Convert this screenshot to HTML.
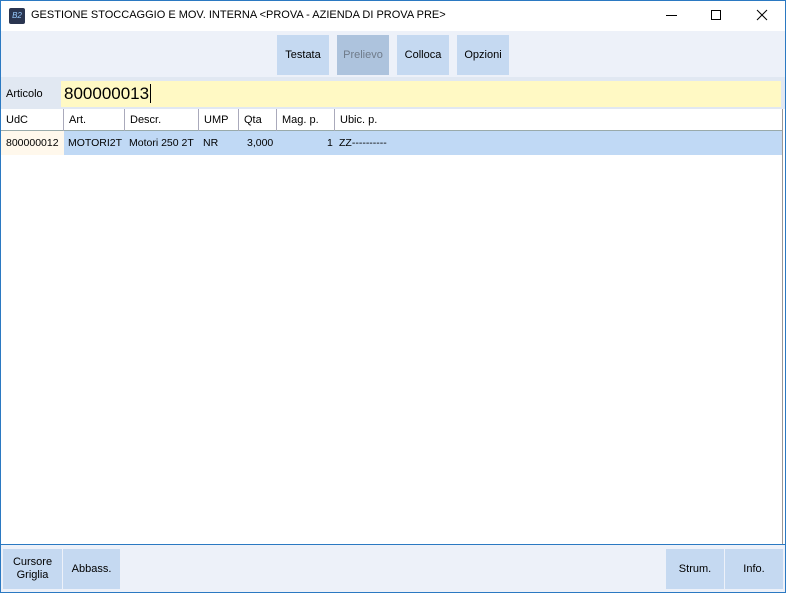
<!DOCTYPE html>
<html><head><style>
*{margin:0;padding:0;box-sizing:border-box}
body{width:786px;height:593px;overflow:hidden;font-family:"Liberation Sans",sans-serif;font-size:11px;color:#000;background:#fff;position:relative}
.frame{position:absolute;left:0;top:0;width:786px;height:593px;border:1px solid #2b79c2}
.abs{position:absolute}
.btn{position:absolute;background:#c5d9f1;display:flex;align-items:center;justify-content:center;text-align:center;font-size:11px;line-height:13px}
.hc{position:absolute;top:109px;height:22px;line-height:22px;padding-left:5px;border-right:1px solid #aab;font-size:11px}
.rc{position:absolute;top:131px;height:24px;line-height:24px;font-size:10.5px}
</style></head><body>
<div class="abs" style="left:0;top:0;width:786px;height:31px;background:#fff"></div>
<div class="abs" style="left:9px;top:8px;width:16px;height:16px;background:#2a3550;border-radius:2px;color:#9cf;font-size:8px;line-height:16px;text-align:center;font-style:italic">B2</div>
<div class="abs" style="left:31px;top:9px;font-size:11px">GESTIONE STOCCAGGIO E MOV. INTERNA &lt;PROVA - AZIENDA DI PROVA PRE&gt;</div>
<div class="abs" style="left:666px;top:15px;width:11px;height:1px;background:#000"></div>
<div class="abs" style="left:711px;top:10px;width:10px;height:10px;border:1px solid #000"></div>
<svg class="abs" style="left:756px;top:9px" width="12" height="12"><path d="M1 1L11 11M11 1L1 11" stroke="#000" stroke-width="1"/></svg>
<div class="abs" style="left:1px;top:31px;width:784px;height:46px;background:#edf1f9"></div>
<div class="btn" style="left:277px;top:35px;width:52px;height:40px">Testata</div>
<div class="btn" style="left:337px;top:35px;width:52px;height:40px;background:#adc3dd;color:#6f7b8a">Prelievo</div>
<div class="btn" style="left:397px;top:35px;width:52px;height:40px">Colloca</div>
<div class="btn" style="left:457px;top:35px;width:52px;height:40px">Opzioni</div>
<div class="abs" style="left:1px;top:77px;width:784px;height:32px;background:#e1e8f2"></div>
<div class="abs" style="left:6px;top:88px;font-size:11px">Articolo</div>
<div class="abs" style="left:61px;top:81px;width:720px;height:26px;background:#fff9c4;font-size:17px;line-height:26px;padding-left:3px">800000013<span style="border-left:1px solid #000;margin-left:1px"></span></div>
<div class="abs" style="left:1px;top:109px;width:782px;height:435px;background:#fff;border-right:1px solid #999"></div>
<div class="abs" style="left:1px;top:130px;width:781px;height:1px;background:#9aa"></div>
<div class="hc" style="left:1px;width:63px">UdC</div>
<div class="hc" style="left:64px;width:61px">Art.</div>
<div class="hc" style="left:125px;width:74px">Descr.</div>
<div class="hc" style="left:199px;width:40px">UMP</div>
<div class="hc" style="left:239px;width:38px">Qta</div>
<div class="hc" style="left:277px;width:58px">Mag. p.</div>
<div class="hc" style="left:335px;width:447px;border-right:none">Ubic. p.</div>
<div class="abs" style="left:1px;top:131px;width:781px;height:24px;background:#c0d9f5"></div>
<div class="abs" style="left:1px;top:131px;width:63px;height:24px;background:#fff8ec"></div>
<div class="rc" style="left:6px">800000012</div>
<div class="rc" style="left:68px">MOTORI2T</div>
<div class="rc" style="left:129px">Motori 250 2T</div>
<div class="rc" style="left:203px">NR</div>
<div class="rc" style="left:247px">3,000</div>
<div class="rc" style="left:327px">1</div>
<div class="rc" style="left:339px">ZZ----------</div>
<div class="abs" style="left:1px;top:544px;width:784px;height:1px;background:#2b79c2"></div>
<div class="abs" style="left:1px;top:545px;width:784px;height:47px;background:#edf1f9"></div>
<div class="btn" style="left:3px;top:549px;width:59px;height:40px">Cursore<br>Griglia</div>
<div class="btn" style="left:63px;top:549px;width:57px;height:40px">Abbass.</div>
<div class="btn" style="left:666px;top:549px;width:58px;height:40px">Strum.</div>
<div class="btn" style="left:725px;top:549px;width:58px;height:40px">Info.</div>
<div class="frame"></div>
</body></html>
